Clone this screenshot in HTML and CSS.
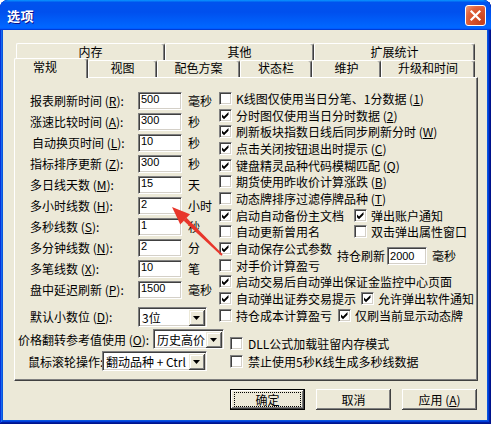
FILE: index.html
```html
<!DOCTYPE html>
<html lang="zh-CN">
<head>
<meta charset="utf-8">
<title>选项</title>
<link rel="stylesheet" href="styles.css">
</head>
<body>
<div class="window">
  <div class="titlebar">
    <span class="title">选项</span>
    <span class="close"><svg width="19" height="19" viewBox="0 0 19 19"><path d="M5.5 5.5 L13.5 13.5 M13.5 5.5 L5.5 13.5" stroke="#fff" stroke-width="2.2" stroke-linecap="square"/></svg></span>
  </div>
  <div class="body">
    <div class="tabrow tabrow-back">
      <div class="tab w149">内存</div>
      <div class="tab w149">其他</div>
      <div class="tab w161">扩展统计</div>
    </div>
    <div class="tabrow tabrow-front">
      <div class="tab tab-active w74">常规</div>
      <div class="tab w69">视图</div>
      <div class="tab w83">配色方案</div>
      <div class="tab w72">状态栏</div>
      <div class="tab w69">维护</div>
      <div class="tab w94">升级和时间</div>
    </div>
    <div class="panel">
      <div class="main">
        <div class="left">
          <div class="frow"><span class="flabel">报表刷新时间 (<u>R</u>):</span><span class="field">500</span><span class="unit">毫秒</span></div>
          <div class="frow"><span class="flabel">涨速比较时间 (<u>A</u>):</span><span class="field">300</span><span class="unit">秒</span></div>
          <div class="frow"><span class="flabel ind2">自动换页时间 (<u>L</u>):</span><span class="field">10</span><span class="unit">秒</span></div>
          <div class="frow"><span class="flabel">指标排序更新 (<u>Z</u>):</span><span class="field">300</span><span class="unit">秒</span></div>
          <div class="frow"><span class="flabel">多日线天数 (<u>M</u>):</span><span class="field">15</span><span class="unit">天</span></div>
          <div class="frow"><span class="flabel">多小时线数 (<u>H</u>):</span><span class="field">2</span><span class="unit">小时</span></div>
          <div class="frow"><span class="flabel">多秒线数 (<u>S</u>):</span><span class="field">1</span><span class="unit">秒</span></div>
          <div class="frow"><span class="flabel">多分钟线数 (<u>N</u>):</span><span class="field">2</span><span class="unit">分</span></div>
          <div class="frow"><span class="flabel">多笔线数 (<u>X</u>):</span><span class="field">10</span><span class="unit">笔</span></div>
          <div class="frow"><span class="flabel">盘中延迟刷新 (<u>P</u>):</span><span class="field">1500</span><span class="unit">毫秒</span></div>
          <div class="frow srow"><span class="flabel">默认小数位 (<u>D</u>):</span><span class="combo c-dec"><span class="ctext">3位</span><span class="cbtn"><svg width="7" height="4" viewBox="0 0 7 4"><path d="M0 0H7L3.5 4Z" fill="#000"/></svg></span></span></div>
        </div>
        <div class="right">
          <div class="crow"><span class="cb"></span><span>K线图仅使用当日分笔、1分数据 (<u>1</u>)</span></div>
          <div class="crow"><span class="cb"><svg viewBox="0 0 11 11"><polygon points="2,4.5 4,6.5 8.5,2 8.5,4.8 4,9.3 2,7.3"/></svg></span><span>分时图仅使用当日分时数据 (<u>2</u>)</span></div>
          <div class="crow"><span class="cb"><svg viewBox="0 0 11 11"><polygon points="2,4.5 4,6.5 8.5,2 8.5,4.8 4,9.3 2,7.3"/></svg></span><span>刷新板块指数日线后同步刷新分时 (<u>W</u>)</span></div>
          <div class="crow"><span class="cb"><svg viewBox="0 0 11 11"><polygon points="2,4.5 4,6.5 8.5,2 8.5,4.8 4,9.3 2,7.3"/></svg></span><span>点击关闭按钮退出时提示 (<u>C</u>)</span></div>
          <div class="crow"><span class="cb"><svg viewBox="0 0 11 11"><polygon points="2,4.5 4,6.5 8.5,2 8.5,4.8 4,9.3 2,7.3"/></svg></span><span>键盘精灵品种代码模糊匹配 (<u>Q</u>)</span></div>
          <div class="crow"><span class="cb"></span><span>期货使用昨收价计算涨跌 (<u>B</u>)</span></div>
          <div class="crow"><span class="cb"></span><span>动态牌排序过滤停牌品种 (<u>T</u>)</span></div>
          <div class="crow">
            <span class="citem w135"><span class="cb"><svg viewBox="0 0 11 11"><polygon points="2,4.5 4,6.5 8.5,2 8.5,4.8 4,9.3 2,7.3"/></svg></span><span>启动自动备份主文档</span></span>
            <span class="citem"><span class="cb"><svg viewBox="0 0 11 11"><polygon points="2,4.5 4,6.5 8.5,2 8.5,4.8 4,9.3 2,7.3"/></svg></span><span>弹出账户通知</span></span>
          </div>
          <div class="crow">
            <span class="citem w135"><span class="cb"></span><span>自动更新曾用名</span></span>
            <span class="citem"><span class="cb"></span><span>双击弹出属性窗口</span></span>
          </div>
          <div class="cgroup">
            <div class="cstack">
              <div class="crow"><span class="cb"><svg viewBox="0 0 11 11"><polygon points="2,4.5 4,6.5 8.5,2 8.5,4.8 4,9.3 2,7.3"/></svg></span><span>自动保存公式参数</span></div>
              <div class="crow"><span class="cb"></span><span>对手价计算盈亏</span></div>
            </div>
            <span class="hold">持仓刷新</span><span class="field f2000">2000</span><span class="unit u2">毫秒</span>
          </div>
          <div class="crow"><span class="cb"><svg viewBox="0 0 11 11"><polygon points="2,4.5 4,6.5 8.5,2 8.5,4.8 4,9.3 2,7.3"/></svg></span><span>启动交易后自动弹出保证金监控中心页面</span></div>
          <div class="crow">
            <span class="citem w142"><span class="cb"><svg viewBox="0 0 11 11"><polygon points="2,4.5 4,6.5 8.5,2 8.5,4.8 4,9.3 2,7.3"/></svg></span><span>自动弹出证券交易提示</span></span>
            <span class="citem"><span class="cb"><svg viewBox="0 0 11 11"><polygon points="2,4.5 4,6.5 8.5,2 8.5,4.8 4,9.3 2,7.3"/></svg></span><span>允许弹出软件通知</span></span>
          </div>
          <div class="crow">
            <span class="citem w119"><span class="cb"></span><span>持仓成本计算盈亏</span></span>
            <span class="citem"><span class="cb"><svg viewBox="0 0 11 11"><polygon points="2,4.5 4,6.5 8.5,2 8.5,4.8 4,9.3 2,7.3"/></svg></span><span>仅刷当前显示动态牌</span></span>
          </div>
        </div>
      </div>
      <div class="bottom">
        <div class="bleft">
          <div class="brow brow1"><span class="blabel1">价格翻转参考值使用 (<u>O</u>):</span><span class="combo c-price"><span class="ctext">历史高价</span><span class="cbtn"><svg width="7" height="4" viewBox="0 0 7 4"><path d="M0 0H7L3.5 4Z" fill="#000"/></svg></span></span></div>
          <div class="brow brow2"><span class="blabel2">鼠标滚轮操作:</span><span class="combo c-wheel"><span class="ctext">翻动品种 + Ctrl</span><span class="cbtn"><svg width="7" height="4" viewBox="0 0 7 4"><path d="M0 0H7L3.5 4Z" fill="#000"/></svg></span></span></div>
        </div>
        <div class="bright">
          <div class="crow crow-b"><span class="cb"></span><span>DLL公式加载驻留内存模式</span></div>
          <div class="crow crow-b"><span class="cb"></span><span>禁止使用5秒K线生成多秒线数据</span></div>
        </div>
      </div>
    </div>
    <div class="buttons">
      <div class="btn btn-default"><span class="focus">确定</span></div>
      <div class="btn">取消</div>
      <div class="btn">应用 (<u>A</u>)</div>
    </div>
  </div>
</div>
<svg class="arrow" width="491" height="424" viewBox="0 0 491 424">
  <polygon points="183.7,220.8 186.5,217.8 222.6,254.3 221.4,255.7" fill="#E8362B"/>
  <polygon points="172,207 190,214.2 180.3,224.6" fill="#E8362B"/>
</svg>
</body>
</html>
```

FILE: styles.css
```css
* { box-sizing: border-box; }
html, body { margin: 0; padding: 0; }
body {
  width: 491px;
  height: 424px;
  overflow: hidden;
  position: relative;
  background: #fff;
  font-family: "Noto Sans CJK SC", "Liberation Sans", sans-serif;
  font-size: 12px;
  color: #000;
}
u { text-decoration: underline; text-underline-offset: 1px; }

.window {
  width: 491px;
  height: 424px;
  display: flex;
  flex-direction: column;
  background: #0855dd;
  border-radius: 8px 8px 0 0;
  overflow: hidden;
  box-shadow: inset -1px -1px #00138c, inset 1px 1px #0831d9, inset -2px -2px #001ea0, inset 2px 2px #166aee, inset -3px -3px #003bda, inset 3px 3px #0855dd;
}
.titlebar {
  height: 30px;
  flex: none;
  display: flex;
  align-items: center;
  justify-content: space-between;
  padding: 0 5px 0 7px;
  background: linear-gradient(180deg, #0997ff, #0053ee 8%, #0050ee 40%, #0066ff 88%, #0066ff 93%, #005bff 95%, #003dd7 96%, #003dd7);
  border-radius: 8px 8px 0 0;
}
.title {
  color: #fff;
  font-weight: bold;
  font-size: 13px;
  letter-spacing: 0.5px;
  text-shadow: 1px 1px #0f1089;
}
.close {
  width: 21px;
  height: 21px;
  border: 1px solid #fff;
  border-radius: 3px;
  display: flex;
  align-items: center;
  justify-content: center;
  background: radial-gradient(circle at 85% 85%, #c5401c 0%, #d9542e 50%, #e1653f 70%, #f0a080 100%);
}

.body {
  flex: 1;
  margin: 0 4px 4px 3px;
  background: #ece9d8;
}

.tabrow { display: flex; }
.tabrow-back { margin: 13px 0 0 13px; height: 17px; }
.tabrow-front { margin: -2px 0 0 11px; height: 19px; }
.tab {
  flex: none;
  height: 17px;
  text-align: center;
  line-height: 15px;
  background: #ece9d8;
  border-top: 1px solid #fff;
  border-left: 1px solid #fff;
  border-right: 1px solid #404040;
  box-shadow: inset -1px 0 #808080;
  border-radius: 2px 3px 0 0;
}
.tabrow-front .tab { margin-top: 2px; line-height: 14px; }
.tabrow-front .tab-active {
  margin-top: 0;
  height: 20px;
  line-height: 16px;
  padding-right: 12px;
  position: relative;
  z-index: 1;
}
.w149 { width: 149px; }
.w161 { width: 161px; }
.w74 { width: 74px; }
.w69 { width: 69px; }
.w83 { width: 83px; }
.w72 { width: 72px; }
.w94 { width: 94px; }

.panel {
  height: 304px;
  margin: 0 9px 0 11px;
  border-top: 1px solid #fff;
  border-left: 1px solid #fff;
  border-right: 1px solid #404040;
  border-bottom: 1px solid #404040;
  box-shadow: inset -1px -1px #808080;
  padding-top: 12px;
}
.main { display: flex; }
.left { width: 204px; flex: none; padding-left: 15px; }
.frow { height: 21px; display: flex; align-items: center; }
.flabel { width: 108px; flex: none; white-space: nowrap; }
.ind2 { padding-left: 2px; }
.srow { margin-top: 6px; }

.field {
  flex: none;
  width: 44px;
  height: 18px;
  background: #fff;
  border: 1px solid;
  border-color: #808080 #fff #fff #808080;
  box-shadow: inset 1px 1px #404040, inset -1px -1px #d4d0c8;
  padding: 0 0 0 2px;
  font-family: "Liberation Sans", Arial, sans-serif;
  font-size: 11px;
  line-height: 12px;
}
.unit { margin-left: 6px; white-space: nowrap; }

.right { flex: 1; }
.crow { height: 16.7px; display: flex; align-items: center; white-space: nowrap; }
.citem { display: flex; align-items: center; }
.w135 { width: 135px; }
.w142 { width: 142px; }
.w119 { width: 119px; }
.cb {
  flex: none;
  width: 13px;
  height: 13px;
  margin-right: 4px;
  background: #fff;
  border: 1px solid;
  border-color: #808080 #fff #fff #808080;
  box-shadow: inset 1px 1px #404040, inset -1px -1px #d4d0c8;
  display: flex;
}
.cb svg { width: 11px; height: 11px; fill: #000; }

.cgroup { display: flex; align-items: center; }
.cstack { width: 118px; flex: none; }
.hold { white-space: nowrap; margin-top: -2px; }
.f2000 { width: 40px; margin-left: 2px; margin-top: -2px; padding-top: 2px; }
.u2 { margin-left: 5px; margin-top: -2px; }

.combo {
  flex: none;
  display: flex;
  height: 20px;
  background: #fff;
  border: 1px solid;
  border-color: #808080 #fff #fff #808080;
  box-shadow: inset 1px 1px #404040, inset -1px -1px #d4d0c8;
  padding: 2px 1px 1px 2px;
}
.ctext {
  flex: 1;
  overflow: hidden;
  white-space: nowrap;
  line-height: 16px;
  padding-left: 1px;
}
.cbtn {
  flex: none;
  width: 16px;
  height: 16px;
  background: #ece9d8;
  box-shadow: inset -1px -1px #404040, inset 1px 1px #ece9d8, inset -2px -2px #808080, inset 2px 2px #fff;
  display: flex;
  align-items: center;
  justify-content: center;
  padding-right: 1px;
}
.c-dec { width: 69px; }
.c-price { width: 71px; }
.c-wheel { width: 105px; }

.bottom { display: flex; margin-top: 1px; }
.bleft { width: 215px; flex: none; }
.brow { height: 22px; display: flex; align-items: center; white-space: nowrap; }
.brow1 { padding-left: 3px; }
.brow2 { padding-left: 13px; }
.blabel1 { width: 135px; flex: none; }
.blabel2 { width: 74px; flex: none; overflow: hidden; }
.bright { padding-top: 6px; }
.crow-b { height: 18px; }
.crow-b .cb { margin-right: 5px; }

.buttons {
  display: flex;
  justify-content: flex-end;
  gap: 11px;
  margin-top: 8px;
  padding-right: 10px;
}
.btn {
  width: 75px;
  height: 21px;
  display: flex;
  align-items: center;
  justify-content: center;
  background: #ece9d8;
  box-shadow: inset -1px -1px #404040, inset 1px 1px #fff, inset -2px -2px #808080, inset 2px 2px #ece9d8;
  white-space: nowrap;
  line-height: 14px;
}
.btn-default {
  border: 1px solid #000;
  padding: 2px 3px;
}
.focus {
  flex: 1;
  align-self: stretch;
  border: 1px dotted #000;
  display: flex;
  align-items: center;
  justify-content: center;
  line-height: 12px;
}

.arrow {
  position: absolute;
  left: 0;
  top: 0;
  pointer-events: none;
}
```
